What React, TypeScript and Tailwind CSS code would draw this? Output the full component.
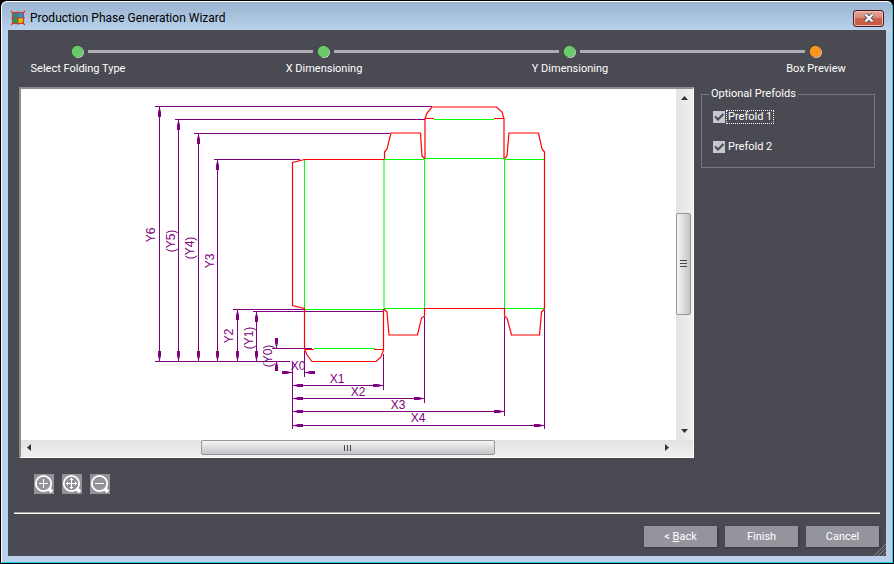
import { Fragment, type ReactNode } from "react";

const steps = [
  { label: "Select Folding Type", active: false },
  { label: "X Dimensioning", active: false },
  { label: "Y Dimensioning", active: false },
  { label: "Box Preview", active: true },
];

const redLines = [
  // glue flap and first panel
  "M384 159.5H304.5L292.5 162.5V305.5L304.5 308.5V349L307 355L312 361.5H376L381 357L383.5 350V309",
  "M305 349.5H314M374 349.5H384",
  // dust flaps, top
  "M384.5 159V152L387 149L391 133H420.5L422 156L424.5 158.5",
  "M504.5 158.5L507 156L509 133H538.5L542 149L544.5 152V309",
  // lid
  "M425 158.5V118.5L427 113L432 107H496.5L502 112L504 118.5V158.5",
  "M425 118.5H434M494 118.5H504",
  // dust flaps, bottom
  "M384 309L387 312L389 335H417.5L421.5 318L424.5 316V308.5H504.5V316L507 318L511.5 335H539.5L541.5 312L544.5 309",
];

const greenLines = [
  "M304.5 160V309M384 159V309M424.5 159V308M504.5 159V308",
  "M384 159.5H424M424 158.5H504M504 159.5H544M434 119.5H494",
  "M305 309.5H384M384 308.5H424M504 308.5H544M314 348.5H375",
];

const dimensionLines = [
  "M155 106.5H432M175 119.5H425M194 133.5H390M214 159.5H300",
  "M233 309.5H305M253 311.5H384M272 348.5H312M155 361.5H290",
  "M159.5 107V361M178.5 120V361M198.5 134V361M217.5 160V361M237.5 310V361M256.5 312V361M276.5 339V348M276.5 362V371",
  "M292.5 362V429M304.5 351V377M383.5 354V390M424.5 317V403M504.5 317V416M544.5 310V429",
  "M282 372.5H292M305 372.5H315M293 385.5H383M293 398.5H424M293 411.5H504M293 425.5H544",
];

// x, y of the tip and the direction it points in
const arrows: [number, number, "up" | "down" | "left" | "right"][] = [
  [159.5, 107, "up"], [178.5, 120, "up"], [198.5, 134, "up"], [217.5, 160, "up"],
  [237.5, 310, "up"], [256.5, 312, "up"], [276.5, 361, "up"],
  [159.5, 361, "down"], [178.5, 361, "down"], [198.5, 361, "down"], [217.5, 361, "down"],
  [237.5, 361, "down"], [256.5, 361, "down"], [276.5, 348, "down"],
  [293, 385.5, "left"], [293, 398.5, "left"], [293, 411.5, "left"], [293, 425.5, "left"], [305, 372.5, "left"],
  [383, 385.5, "right"], [424, 398.5, "right"], [504, 411.5, "right"], [544, 425.5, "right"], [292, 372.5, "right"],
];

const angles = { up: 0, right: 90, down: 180, left: 270 };

const xLabels: [string, number, number][] = [
  ["X0", 298, 370], ["X1", 337, 383], ["X2", 358, 396], ["X3", 398, 409], ["X4", 418, 422],
];

const yLabels: [string, number, number][] = [
  ["Y6", 155, 235], ["(Y5)", 175, 241], ["(Y4)", 194, 248], ["Y3", 214, 261],
  ["Y2", 233, 336], ["(Y1)", 253, 338], ["(Y0)", 272, 356],
];

function BoxDrawing() {
  return (
    <svg viewBox="21 89 655 351" className="min-w-0 flex-1 bg-white" role="img" aria-label="Box preview">
      <g fill="none" strokeWidth="1">
        <path d={greenLines.join("")} stroke="#00ff00" />
        <path d={dimensionLines.join("")} stroke="#800080" />
        <path d={redLines.join("")} stroke="#ff0000" strokeWidth="1.2" />
      </g>
      <g fill="#800080">
        {arrows.map(([x, y, dir]) => (
          <path key={`${x}-${y}-${dir}`} d="M0 0L1.5 5V10H-1.5V5Z" transform={`translate(${x} ${y}) rotate(${angles[dir]})`} />
        ))}
      </g>
      <g fill="#800080" fontSize="12" textAnchor="middle" className="font-['Liberation_Sans',sans-serif]">
        {xLabels.map(([text, x, y]) => (
          <text key={text} x={x} y={y}>{text}</text>
        ))}
        {yLabels.map(([text, x, y]) => (
          <text key={text} transform={`translate(${x} ${y}) rotate(-90)`}>{text}</text>
        ))}
      </g>
    </svg>
  );
}

function ScrollArrow({ d, label }: { d: string; label: string }) {
  return (
    <button type="button" aria-label={label} className="grid size-[17px] shrink-0 place-items-center">
      <svg viewBox="0 0 17 17" className="size-[17px]" fill="#333">
        <path d={d} />
      </svg>
    </button>
  );
}

function Stepper() {
  return (
    <div className="pt-3.5">
      <div className="flex items-center pr-16 pl-[62px]">
        {steps.map((step, i) => (
          <Fragment key={step.label}>
            {i > 0 && <div className="mr-[3px] ml-1 h-[3px] flex-1 bg-[#adadb8]" />}
            <svg viewBox="0 0 14 14" className="size-3.5 shrink-0">
              <circle cx="8" cy="8" r="6" fill="#e4e4e8" />
              <circle cx="7" cy="7" r="6.3" fill="#3f4442" />
              <circle cx="7.5" cy="7.5" r="5.8" fill={step.active ? "#fb9520" : "#6acb6c"} />
            </svg>
          </Fragment>
        ))}
      </div>
      <ol className="mt-[3px] flex justify-between px-3.5">
        {steps.map((step) => (
          <li key={step.label} aria-current={step.active ? "step" : undefined} className="w-28 text-center whitespace-nowrap">
            {step.label}
          </li>
        ))}
      </ol>
    </div>
  );
}

function Prefold({ label, focused }: { label: string; focused?: boolean }) {
  return (
    <label className="flex h-4 items-center">
      <span className="grid">
        <input type="checkbox" defaultChecked className="peer col-start-1 row-start-1 size-3 appearance-none bg-[#c6c6cd]" />
        <svg viewBox="0 0 12 12" className="pointer-events-none invisible col-start-1 row-start-1 size-3 peer-checked:visible" fill="none" stroke="#4a4a52" strokeWidth="2">
          <path d="M2 5.5L5 8.5L10.5 3" />
        </svg>
      </span>
      <span className={focused ? "ml-px border border-dotted border-white px-px leading-3" : "ml-px border border-transparent px-px leading-3"}>
        {label}
      </span>
    </label>
  );
}

function ZoomButton({ label, children }: { label: string; children: ReactNode }) {
  return (
    <button type="button" aria-label={label} className="size-5 bg-[#929299]">
      <svg viewBox="0 0 20 20" className="size-5" fill="none" stroke="#fff" strokeWidth="1">
        <circle cx="9.5" cy="9.5" r="7.7" strokeWidth="1.8" />
        <path d="M14.8 14.8L18 18" strokeWidth="3.4" />
        {children}
      </svg>
    </button>
  );
}

function WizardButton({ children }: { children: ReactNode }) {
  return (
    <button type="button" className="h-[21px] w-[73px] bg-[#94949c] shadow-[1px_1px_2px_#36363c]">
      {children}
    </button>
  );
}

export default function App() {
  return (
    <div className="flex min-h-screen flex-col bg-black p-px font-[Roboto,sans-serif] text-[11px] leading-4 text-white">
      <div className="flex flex-1 flex-col rounded-t-md border border-t-white border-r-[#26cdea] border-b-[#26cdea] border-l-white bg-[#b9d1ea] px-1.5 pb-1.5">
        <header className="-mx-1.5 flex h-7 items-center rounded-t-md bg-linear-to-b from-[#99b4d1] to-[#b9d1ea] pr-2 pl-2 text-black">
          <svg viewBox="0 0 16 16" className="mt-1 size-4 shrink-0">
            <path d="M3 3H8V8H3Z" fill="#0b9a8a" />
            <path d="M8 3H13V8H8Z" fill="#1a9ad8" />
            <path d="M3 8H8V13H3Z" fill="#12a54a" />
            <path d="M8 8H13V13H8Z" fill="#e0c000" />
            <path d="M2.5 2.5H13.5V13.5H2.5ZM8 1V15M1 8H15M1 1L4 4M15 1L12 4M1 15L4 12M15 15L12 12" fill="none" stroke="#cc3b36" strokeWidth="1.1" />
          </svg>
          <h1 className="mt-1 ml-1 flex-1 text-xs">Production Phase Generation Wizard</h1>
          <button
            type="button"
            aria-label="Close"
            className="mt-1 grid h-[17px] w-[31px] place-items-center rounded-[3px] border border-[#431822] bg-linear-to-b from-[#e5a898] from-0% via-[#d88476] via-50% to-[#cf6a50] to-100% shadow-[inset_0_0_0_1px_#f0bdb2,inset_0_-8px_0_#bf3d2377]"
          >
            <svg viewBox="0 0 12 10" className="h-2.5 w-3" fill="none">
              <path d="M2.5 1.5L9.5 8.5M9.5 1.5L2.5 8.5" stroke="#53566a" strokeWidth="4" />
              <path d="M2.5 1.5L9.5 8.5M9.5 1.5L2.5 8.5" stroke="#fff" strokeWidth="2.2" />
            </svg>
          </button>
        </header>

        <main className="relative flex flex-1 flex-col bg-[#4a4a52]">
          <Stepper />

          <div className="mt-2.5 flex flex-1 gap-[7px] px-[11px]">
            <div className="flex min-w-0 flex-1 flex-col border-t-2 border-r border-b border-l-2 border-t-[#8d8d8d] border-r-white border-b-white border-l-[#8d8d8d] bg-[#f0f0f0]">
              <div className="flex flex-1">
                <BoxDrawing />
                <div className="flex w-[17px] flex-col bg-linear-to-r from-[#e3e3e3] to-[#f0f0f0]">
                  <ScrollArrow label="Scroll up" d="M5 11L8.5 7L12 11Z" />
                  <div className="flex flex-1 flex-col justify-center pb-0.5">
                    <div className="grid h-[102px] w-[15px] place-items-center rounded-xs border border-[#979797] bg-linear-to-r from-[#f5f5f5] to-[#c4c4c9]">
                      <svg viewBox="0 0 8 8" className="size-2" stroke="#444">
                        <path d="M0 0.5H7M0 3.5H7M0 6.5H7" />
                      </svg>
                    </div>
                  </div>
                  <ScrollArrow label="Scroll down" d="M5 6L8.5 10L12 6Z" />
                </div>
              </div>
              <div className="flex h-[17px] bg-linear-to-b from-[#e3e3e3] to-[#f0f0f0] pr-[17px]">
                <ScrollArrow label="Scroll left" d="M10 4L6 7.5L10 11Z" />
                <div className="flex flex-1 justify-center pr-0.5">
                  <div className="grid h-[15px] w-[294px] place-items-center rounded-xs border border-[#979797] bg-linear-to-b from-[#f5f5f5] to-[#c4c4c9]">
                    <svg viewBox="0 0 8 8" className="size-2" stroke="#444">
                      <path d="M0.5 1V7M3.5 1V7M6.5 1V7" />
                    </svg>
                  </div>
                </div>
                <ScrollArrow label="Scroll right" d="M6 4L10 7.5L6 11Z" />
              </div>
            </div>

            <fieldset className="h-[81px] w-[174px] border border-[#77777f] px-[11px] pt-2">
              <legend className="-ml-1 px-0.5 leading-[14px]">Optional Prefolds</legend>
              <Prefold label="Prefold 1" focused />
              <div className="h-3.5" />
              <Prefold label="Prefold 2" />
            </fieldset>
          </div>

          <div className="mt-4 flex gap-2 pl-[26px]">
            <ZoomButton label="Zoom in">
              <path d="M9.5 5V14M5 9.5H14" />
            </ZoomButton>
            <ZoomButton label="Zoom to fit">
              <path d="M9.5 4V15M4 9.5H15M8 5.5H11M8 13.5H11M5.5 8V11M13.5 8V11" />
            </ZoomButton>
            <ZoomButton label="Zoom out">
              <path d="M5 9.5H14" />
            </ZoomButton>
          </div>

          <hr className="mx-1.5 mt-[18px] border-t border-b border-t-[#a5a59d] border-b-white" />

          <footer className="mt-3 flex justify-end gap-2 pr-[7px] pb-[9px]">
            <WizardButton>
              &lt; <u>B</u>ack
            </WizardButton>
            <WizardButton>Finish</WizardButton>
            <WizardButton>Cancel</WizardButton>
          </footer>
          <svg viewBox="0 0 14 14" className="absolute right-0 bottom-0 size-3.5" stroke="#8b8b91">
            <path d="M2 14L14 2M6 14L14 6M10 14L14 10" />
          </svg>
        </main>
      </div>
    </div>
  );
}
